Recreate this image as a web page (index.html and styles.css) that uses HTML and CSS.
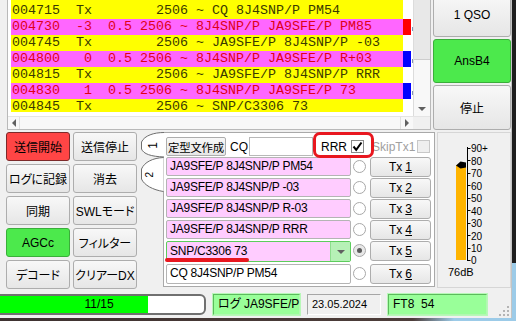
FILE: index.html
```html
<!DOCTYPE html>
<html lang="ja">
<head>
<meta charset="utf-8">
<title>WSJT-X JTDX</title>
<link rel="stylesheet" href="styles.css">
</head>
<body>
<div class="win">
  <div class="top">
    <div class="lb">
      <div class="lb-main">
        <div class="rows-wrap">
          <div class="rows">
            <div class="first"></div>
            <div class="row tx"><span class="t">004715  Tx        2506 ~ CQ 8J4SNP/P PM54</span></div>
            <div class="row rx"><span class="t">004730  -3  0.5 2506 ~ 8J4SNP/P JA9SFE/P PM85</span><span class="mk red"></span><span class="x"></span></div>
            <div class="row tx"><span class="t">004745  Tx        2506 ~ JA9SFE/P 8J4SNP/P -03</span></div>
            <div class="row rx"><span class="t">004800   0  0.5 2506 ~ 8J4SNP/P JA9SFE/P R+03</span><span class="mk blue"></span><span class="x"></span></div>
            <div class="row tx"><span class="t">004815  Tx        2506 ~ JA9SFE/P 8J4SNP/P RRR</span></div>
            <div class="row rx"><span class="t">004830   1  0.5 2506 ~ 8J4SNP/P JA9SFE/P 73</span><span class="mk blue"></span><span class="x"></span></div>
            <div class="row tx"><span class="t">004845  Tx        2506 ~ SNP/C3306 73</span></div>
          </div>
        </div>
        <div class="vs">
          <div class="thumb"></div>
          <div class="track"></div>
          <div class="arr"><i class="tri-d"></i></div>
        </div>
      </div>
      <div class="hs">
        <div class="hb"><i class="tri-l"></i></div>
        <div class="htrack"></div>
        <div class="hb r"><i class="tri-r"></i></div>
        <div class="corner"></div>
      </div>
    </div>
    <div class="rb">
      <button class="btn big">1 QSO</button>
      <button class="btn big green">AnsB4</button>
      <button class="btn big last">停止</button>
    </div>
  </div>

  <div class="mid">
    <div class="grid">
      <button class="btn red">送信開始</button>
      <button class="btn">送信停止</button>
      <button class="btn">ログに記録</button>
      <button class="btn">消去</button>
      <button class="btn">同期</button>
      <button class="btn">SWLモード</button>
      <button class="btn green">AGCc</button>
      <button class="btn">フィルター</button>
      <button class="btn">デコード</button>
      <button class="btn">クリアーDX</button>
    </div>

    <div class="tabs">
      <svg class="tabshape" width="24" height="62" viewBox="0 0 24 62">
        <rect x="22" y="1" width="2" height="24" fill="#ffffff"/>
        <path d="M23,0.5 C13,0.5 3.5,3.5 0.5,10 L0.5,17 C2.5,22 10,24.5 23,25" fill="#ffffff" stroke="#6e6e6e"/>
        <path d="M22.5,25.5 C12,26 3.5,30 0.5,37 L0.5,47 C3,53 12,58 22.5,59.5" fill="#ffffff" stroke="#6e6e6e"/>
      </svg>
      <div class="tab tab1"><span>1</span></div>
      <div class="tab tab2"><span>2</span></div>
    </div>

    <div class="panel">
      <div class="hdr">
        <button class="btn tmpl">定型文作成</button>
        <span class="cq">CQ</span>
        <span class="inp"></span>
        <span class="rrr">RRR</span>
        <span class="chk on"><svg width="11" height="11" viewBox="0 0 11 11"><path d="M1.5,5.5 L4.2,8.8 L9.5,1.5" fill="none" stroke="#000" stroke-width="2"/></svg></span>
        <span class="skip">SkipTx1</span>
        <span class="chk dis"></span>
      </div>
      <div class="mrow"><span class="box pink">JA9SFE/P 8J4SNP/P PM54</span><span class="radio"></span><button class="btn txb">Tx <u>1</u></button></div>
      <div class="mrow"><span class="box pink">JA9SFE/P 8J4SNP/P -03</span><span class="radio"></span><button class="btn txb">Tx <u>2</u></button></div>
      <div class="mrow"><span class="box pink">JA9SFE/P 8J4SNP/P R-03</span><span class="radio"></span><button class="btn txb">Tx <u>3</u></button></div>
      <div class="mrow"><span class="box pink">JA9SFE/P 8J4SNP/P RRR</span><span class="radio"></span><button class="btn txb">Tx <u>4</u></button></div>
      <div class="mrow"><span class="combo"><span class="ctext">SNP/C3306 73</span><span class="dd"><i class="tri-d"></i></span></span><span class="radio sel"><i></i></span><button class="btn txb">Tx <u>5</u></button></div>
      <div class="mrow last"><span class="box white">CQ 8J4SNP/P PM54</span><span class="radio"></span><button class="btn txb">Tx <u>6</u></button></div>

      <div class="ann-box"></div>
      <div class="ann-line"></div>
    </div>

    <div class="meter">
      <svg class="gauge" width="72" height="134" viewBox="0 0 72 134">
        <rect x="18" y="32" width="10" height="95" fill="#ffb400"/>
        <polygon points="18,32.5 22.5,28.5 28,29.5 28,34.5 22.5,35.5" fill="#000000"/>
        <path d="M29.5,14 V128 M29,15.5 H32.5 M29,27.5 H32.5 M29,40.5 H32.5 M29,52.5 H32.5 M29,65.5 H32.5 M29,77.5 H32.5 M29,90.5 H32.5 M29,102.5 H32.5 M29,115.5 H32.5 M29,127.5 H32.5" stroke="#000000" stroke-width="1" fill="none"/>
        <g class="lbl">
          <text x="33" y="19">90+</text>
          <text x="33" y="31.5">80</text>
          <text x="33" y="44">70</text>
          <text x="33" y="56.5">60</text>
          <text x="33" y="69">50</text>
          <text x="33" y="81.5">40</text>
          <text x="33" y="94">30</text>
          <text x="33" y="106.5">20</text>
          <text x="33" y="119">10</text>
          <text x="33" y="131">0</text>
        </g>
      </svg>
      <div class="db">76dB</div>
    </div>
  </div>

  <div class="status">
    <div class="prog">11/15</div>
    <div class="sb g log">ログ JA9SFE/P</div>
    <div class="sb date">23.05.2024</div>
    <div class="sb g mode">FT8&nbsp;&nbsp;54</div>
    <svg class="grip" width="11" height="11" viewBox="0 0 11 11">
      <g fill="#b4b4b4">
        <rect x="8" y="0" width="2" height="2"/>
        <rect x="4" y="4" width="2" height="2"/><rect x="8" y="4" width="2" height="2"/>
        <rect x="0" y="8" width="2" height="2"/><rect x="4" y="8" width="2" height="2"/><rect x="8" y="8" width="2" height="2"/>
      </g>
    </svg>
  </div>
</div>
</body>
</html>
```

FILE: styles.css
```css
* { box-sizing: border-box; }

html, body { margin: 0; padding: 0; }

body {
  width: 516px;
  height: 321px;
  overflow: hidden;
  background:
    linear-gradient(to right, #3e3230 0, #4d3d3a 80%, #9ccbe8 88%, #9ccbe8 100%) left bottom / 100% 3px no-repeat,
    linear-gradient(to bottom, #1e1e1e 0, #1e1e1e 82%, #9ccbe8 82%, #9ccbe8 100%);
  font-family: "Liberation Sans", "Noto Sans CJK JP", sans-serif;
  font-size: 12px;
  color: #000;
  font-feature-settings: "palt";
}

.win {
  width: 512px;
  height: 318px;
  background: #f0f0f0;
  border-right: 1px solid #c4c4c4;
  display: flex;
  flex-direction: column;
  overflow: hidden;
}

/* ---------- generic button ---------- */
.btn {
  margin: 0;
  padding: 0;
  border: 1px solid #adadad;
  border-radius: 3px;
  background: linear-gradient(#f8f8f8, #e6e6e6);
  font-family: "Liberation Sans", "Noto Sans CJK JP", sans-serif;
  font-size: 12px;
  font-feature-settings: "palt";
  color: #000;
  display: flex;
  align-items: center;
  justify-content: center;
  white-space: nowrap;
  overflow: hidden;
}
.btn.green {
  background: #4ce94c;
  border-color: #3aae3a;
}
.btn.red {
  background: #ff4545;
  border-color: #7c2a2a;
}

/* ---------- top: decode list ---------- */
.top {
  display: flex;
  height: 131px;
}

.lb {
  margin-left: 7px;
  width: 424px;
  height: 130px;
  border: 1px solid #b9b9b9;
  border-top: none;
  background: #fff;
  display: flex;
  flex-direction: column;
}

.lb-main {
  display: flex;
  height: 116px;
}

.rows-wrap {
  width: 405px;
  height: 116px;
  background: #fff;
  overflow: hidden;
}

.rows {
  height: 112px;
  overflow: hidden;
}

.first {
  height: 3px;
  margin-left: 3px;
  width: 392px;
  background: #ffff00;
}

.row {
  display: flex;
  height: 16px;
  padding-left: 3px;
  white-space: pre;
  font-family: "Liberation Mono", monospace;
  font-size: 13.333px;
  line-height: 16px;
  font-feature-settings: normal;
}
.row .t {
  flex: none;
  width: 392px;
  padding-left: 1px;
}
.tx .t { background: #ffff00; color: #3a3a00; }
.rx .t { background: #ff66ff; color: #e00018; }

.mk { flex: none; width: 8px; }
.mk.red { background: #ff0000; }
.mk.blue { background: #0000ff; }

.x {
  flex: none;
  width: 2px;
  height: 4px;
  margin-top: 8px;
  margin-left: 1px;
  background: #7d92b8;
}

.vs {
  width: 17px;
  height: 116px;
  border-left: 1px solid #dcdcdc;
  background: #f8f8f8;
  display: flex;
  flex-direction: column;
}
.thumb {
  height: 60px;
  background: #e8e8e8;
  border-bottom: 1px solid #cdcdcd;
}
.vs .track { flex: 1; }
.vs .arr {
  height: 15px;
  display: flex;
  align-items: center;
  justify-content: center;
}

.tri-d {
  display: block;
  width: 0;
  height: 0;
  border-left: 4px solid transparent;
  border-right: 4px solid transparent;
  border-top: 4px solid #606060;
}
.tri-l {
  display: block;
  width: 0;
  height: 0;
  border-top: 4px solid transparent;
  border-bottom: 4px solid transparent;
  border-right: 4px solid #606060;
}
.tri-r {
  display: block;
  width: 0;
  height: 0;
  border-top: 4px solid transparent;
  border-bottom: 4px solid transparent;
  border-left: 4px solid #606060;
}

.hs {
  height: 13px;
  display: flex;
  border-top: 1px solid #e4e4e4;
  background: #f8f8f8;
}
.hb {
  width: 12px;
  display: flex;
  align-items: center;
  justify-content: center;
  border-right: 1px solid #e0e0e0;
}
.hb.r {
  width: 13px;
  border-right: none;
  border-left: 1px solid #e0e0e0;
}
.htrack { flex: 1; }
.corner { width: 17px; background: #f0f0f0; }

.rb {
  margin-left: 2px;
  margin-top: -7px;
  width: 78px;
  display: flex;
  flex-direction: column;
  gap: 2px;
}
.rb .big { height: 44px; }
.rb .last { height: 45px; }

/* ---------- middle ---------- */
.mid {
  display: flex;
  height: 160px;
  padding-top: 1px;
}

.grid {
  margin-left: 6px;
  display: grid;
  grid-template-columns: 64px 64px;
  grid-auto-rows: 29px;
  gap: 3px;
  align-content: start;
}

.tabs {
  margin-left: 4px;
  width: 22px;
  height: 62px;
  position: relative;
  z-index: 2;
  display: flex;
  flex-direction: column;
}
.tabshape {
  position: absolute;
  left: 0;
  top: 0;
}
.tab {
  position: relative;
  display: flex;
  align-items: center;
  justify-content: center;
  font-size: 12px;
}
.tab span {
  writing-mode: vertical-rl;
  transform: rotate(180deg);
  line-height: 12px;
}
.tab1 { height: 26px; padding-left: 2px; }
.tab2 { height: 34px; padding-right: 5px; font-size: 10px; }

.panel {
  position: relative;
  width: 272px;
  height: 155px;
  border: 1px solid #a9a9a9;
  background: #fff;
  padding: 4px 3px 0 2px;
}

.hdr {
  display: flex;
  align-items: center;
  height: 19px;
  margin-bottom: 1px;
}
.tmpl {
  width: 60px;
  height: 19px;
  border-radius: 2px;
  font-size: 11.4px;
  letter-spacing: -0.2px;
}
.cq {
  margin-left: 4px;
  width: 18px;
}
.inp {
  margin-left: 1px;
  width: 64px;
  height: 19px;
  background: #fff;
  border: 1px solid #b8b8b8;
}
.rrr {
  margin-left: 8px;
  width: 27px;
}
.chk {
  width: 13px;
  height: 13px;
  border: 1px solid #8a8a8a;
  background: #fff;
  display: flex;
  align-items: center;
  justify-content: center;
}
.chk.on { margin-left: 3px; }
.chk.dis {
  margin-left: 2px;
  background: #efefef;
  border-color: #c8c8c8;
}
.skip {
  margin-left: 8px;
  width: 43px;
  color: #a0a0a0;
  white-space: nowrap;
}

.mrow {
  display: flex;
  align-items: flex-start;
  height: 21px;
}
.mrow.last { margin-top: 2px; }

.box {
  width: 185px;
  height: 19px;
  border: 1px solid #b4b4b4;
  border-radius: 2px;
  padding-left: 3px;
  line-height: 17px;
  letter-spacing: -0.25px;
  white-space: nowrap;
}
.box.pink { background: #ffccff; }
.box.white { background: #fff; height: 20px; }

.combo {
  width: 185px;
  height: 21px;
  border: 1px solid #5ccd5c;
  border-radius: 2px;
  background: #ffccff;
  display: flex;
}
.ctext {
  flex: 1;
  padding-left: 3px;
  line-height: 19px;
  letter-spacing: -0.25px;
}
.dd {
  width: 20px;
  background: #b6f1b6;
  border-left: 1px solid #8ede8e;
  display: flex;
  align-items: center;
  justify-content: center;
}

.radio {
  margin: 3px 4px 0 2px;
  width: 13px;
  height: 13px;
  border-radius: 50%;
  border: 1px solid #a8a8a8;
  background: #fff;
  display: flex;
  align-items: center;
  justify-content: center;
}
.radio.sel { background: #e8e8e8; }
.radio.sel i {
  display: block;
  width: 5px;
  height: 5px;
  border-radius: 50%;
  background: #5a5a5a;
}

.txb {
  width: 61px;
  height: 20px;
}
.txb u { margin-left: 3px; }

.ann-box {
  position: absolute;
  left: 149px;
  top: -1px;
  width: 61px;
  height: 26px;
  border: 3px solid #e8171f;
  border-radius: 7px;
}
.ann-line {
  position: absolute;
  left: 1px;
  top: 125px;
  width: 84px;
  height: 4px;
  border-radius: 2px;
  background: #e8171f;
}

.meter {
  margin-left: 2px;
  width: 74px;
  height: 156px;
  border: 1px solid #d6d6d6;
  display: flex;
  flex-direction: column;
}
.gauge { display: block; flex: none; }
.gauge .lbl text {
  font-family: "Liberation Sans", sans-serif;
  font-size: 10px;
  fill: #000;
}
.db {
  padding-left: 10px;
  font-size: 11px;
  line-height: 11px;
}

/* ---------- status bar ---------- */
.status {
  display: flex;
  height: 21px;
  margin-top: 3px;
  position: relative;
}
.prog {
  margin-left: -8px;
  width: 214px;
  border: 2px solid #707070;
  border-radius: 6px;
  background: linear-gradient(to right, #00ff00 0, #00ff00 154px, #ffffff 154px);
  text-align: center;
  line-height: 17px;
  font-size: 12px;
}
.sb {
  margin-left: 7px;
  padding-left: 4px;
  line-height: 19px;
  font-size: 12px;
  border: 1px solid;
  white-space: nowrap;
}
.sb.g {
  background: #99ff99;
  border-color: #5cbb5c #b2f7b2 #b2f7b2 #5cbb5c;
  box-shadow: 0 0 0 1px #b8f8b8;
}
.log { width: 87px; }
.date {
  width: 74px;
  background: #f0f0f0;
  border-color: #a6a6a6 #ffffff #ffffff #a6a6a6;
  font-size: 11px;
}
.mode { width: 99px; }
.grip {
  margin-left: auto;
  margin-right: 1px;
  align-self: flex-end;
  margin-bottom: -2px;
}
```
